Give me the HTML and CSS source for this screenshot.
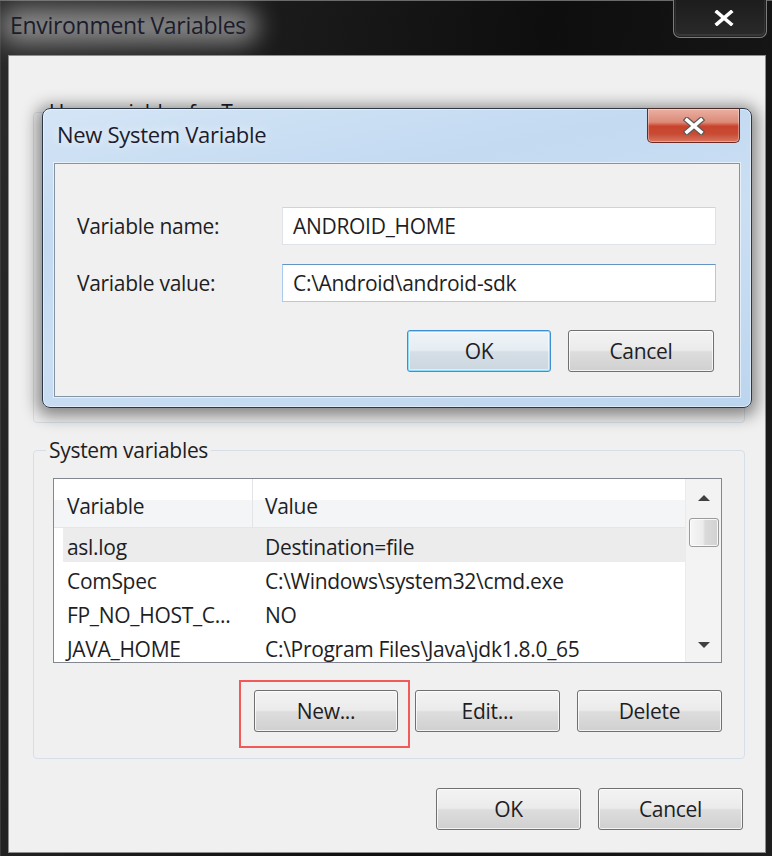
FILE: index.html
```html
<!DOCTYPE html>
<html>
<head>
<meta charset="utf-8">
<title>Environment Variables</title>
<link rel="stylesheet" href="styles.css">
</head>
<body>
<div class="window">
  <div class="titlebar">
    <span class="title">Environment Variables</span>
    <div class="close-outer">
      <svg width="20" height="16" viewBox="0 0 20 16"><path d="M3 2 L17 14 M17 2 L3 14" stroke="#ffffff" stroke-width="3.6" stroke-linecap="square" fill="none"/></svg>
    </div>
  </div>
  <div class="client">
    <fieldset class="group user-group"><legend>User variables for T</legend></fieldset>
    <fieldset class="group sys-group">
      <legend>System variables</legend>
      <div class="list">
        <div class="list-main">
          <div class="list-head"><div class="c1">Variable</div><div class="c2">Value</div></div>
          <div class="row sel"><div class="c1">asl.log</div><div class="c2">Destination=file</div></div>
          <div class="row"><div class="c1">ComSpec</div><div class="c2">C:\Windows\system32\cmd.exe</div></div>
          <div class="row"><div class="c1">FP_NO_HOST_C...</div><div class="c2">NO</div></div>
          <div class="row"><div class="c1">JAVA_HOME</div><div class="c2">C:\Program Files\Java\jdk1.8.0_65</div></div>
        </div>
        <div class="scrollbar">
          <div class="sb-btn"><span class="arrow-up"></span></div>
          <div class="thumb"></div>
          <div class="sb-track"></div>
          <div class="sb-btn sb-down"><span class="arrow-down"></span></div>
        </div>
      </div>
      <div class="btn-row">
        <button class="btn btn-new">New...</button>
        <button class="btn btn-w145">Edit...</button>
        <button class="btn btn-w145">Delete</button>
      </div>
    </fieldset>
    <div class="btn-row footer">
      <button class="btn btn-w145">OK</button>
      <button class="btn btn-w145">Cancel</button>
    </div>

    <div class="dialog">
      <div class="dialog-title">
        <span class="dialog-caption">New System Variable</span>
        <div class="close-red">
          <svg width="26" height="18" viewBox="0 0 26 18"><path d="M6 3 L20 15 M20 3 L6 15" stroke="#5a5a5a" stroke-width="6" stroke-linecap="square" fill="none"/><path d="M6 3 L20 15 M20 3 L6 15" stroke="#ffffff" stroke-width="3.6" stroke-linecap="square" fill="none"/></svg>
        </div>
      </div>
      <div class="dialog-body">
        <div class="form">
          <label class="lbl">Variable name:</label>
          <div class="input">ANDROID_HOME</div>
          <label class="lbl">Variable value:</label>
          <div class="input focused">C:\Android\android-sdk</div>
        </div>
        <div class="btn-row dlg-btns">
          <button class="btn btn-default">OK</button>
          <button class="btn btn-w146">Cancel</button>
        </div>
      </div>
    </div>
  </div>
</div>
</body>
</html>
```
FILE: styles.css
```css
* { box-sizing: border-box; }
html, body { margin: 0; padding: 0; }
body {
  width: 772px;
  height: 856px;
  overflow: hidden;
  background: #111;
  font-family: "Open Sans", "Noto Sans", sans-serif;
  font-size: 21px;
  letter-spacing: -0.3px;
  color: #1e1e24;
}

.window {
  height: 856px;
  display: flex;
  flex-direction: column;
  background: linear-gradient(100deg, #2a2a2a 0%, #1b1b1b 30%, #0e0e0e 60%, #151515 85%, #1e1e1e 100%);
  box-shadow: inset 0 1px 0 #6a6a6a, inset 1px 0 0 #3a3a3a;
}

.titlebar {
  height: 55px;
  flex: none;
  display: flex;
  justify-content: space-between;
  align-items: flex-start;
  position: relative;
  z-index: 0;
}
.title {
  position: relative;
  margin: 11px 0 0 10px;
  font-size: 23px;
  line-height: 28px;
  color: #1c1c2c;
}
.title::before {
  content: "";
  position: absolute;
  left: -10px;
  right: -12px;
  top: -2px;
  bottom: -4px;
  background: rgba(175, 175, 175, 0.75);
  filter: blur(12px);
  border-radius: 30px;
  z-index: -1;
}
.close-outer {
  width: 94px;
  height: 39px;
  margin: -1px 5px 0 0;
  border: 1px solid #7c7c7c;
  border-top: none;
  border-radius: 0 0 7px 7px;
  box-shadow: inset 0 0 0 1px #222, inset 0 -1px 0 2px rgba(255,255,255,0.07);
  background: linear-gradient(#1c1c1c, #2a2a2a);
  display: flex;
  align-items: center;
  justify-content: center;
  padding-left: 8px;
}

.client {
  flex: 1;
  margin: 0 6px 3px 8px;
  border: 1px solid #8e8e8e;
  background: #f0f0f0;
  position: relative;
  display: flex;
  flex-direction: column;
}

.group {
  border: 1px solid #d6dfe7;
  border-radius: 4px;
  margin: 0 20px 0 24px;
  min-width: 0;
}
.group legend {
  font-size: 21px;
  line-height: 24px;
  padding: 0 3px;
  margin-left: -7px;
}
.user-group {
  margin-top: 44px;
  height: 323px;
  padding: 0 19px;
}
.sys-group {
  margin-top: 15px;
  padding: 16px 22px 26px 19px;
}

.list {
  height: 185px;
  border: 1px solid #828790;
  background: #fff;
  display: flex;
}
.list-main {
  flex: 1;
  overflow: hidden;
}
.list-head {
  height: 49px;
  display: flex;
  background: linear-gradient(#fff 0, #fff 44%, #f4f5f7 44%, #f4f5f7 100%);
  border-bottom: 1px solid #e4e6e9;
}
.list-head .c1 {
  width: 199px;
  padding: 15px 0 0 13px;
  border-right: 1px solid #e2e4e7;
  line-height: 24px;
}
.list-head .c2 {
  padding: 15px 0 0 12px;
  line-height: 24px;
}
.row {
  height: 34px;
  display: flex;
  align-items: center;
  padding-top: 4px;
  line-height: 24px;
  white-space: nowrap;
}
.row .c1 { width: 199px; padding-left: 13px; }
.row .c2 { padding-left: 12px; }
.row.sel {
  background: linear-gradient(to right, transparent 9px, #ececec 9px);
}

.scrollbar {
  width: 36px;
  flex: none;
  background: #f3f3f3;
  border-left: 1px solid #ebebeb;
  display: flex;
  flex-direction: column;
  align-items: center;
}
.sb-btn {
  height: 37px;
  width: 100%;
  display: flex;
  align-items: center;
  justify-content: center;
}
.sb-down { height: 35px; }
.arrow-up {
  width: 0; height: 0;
  border-left: 6px solid transparent;
  border-right: 6px solid transparent;
  border-bottom: 6px solid #404040;
}
.arrow-down {
  width: 0; height: 0;
  border-left: 6px solid transparent;
  border-right: 6px solid transparent;
  border-top: 6px solid #404040;
}
.thumb {
  width: 30px;
  height: 29px;
  margin-top: 2px;
  border: 1px solid #9b9b9b;
  border-radius: 3px;
  background: linear-gradient(to right, #f6f6f6 0%, #ececec 45%, #dadada 55%, #d2d2d2 100%);
  box-shadow: inset 0 0 0 1px rgba(255,255,255,0.8);
}
.sb-track { flex: 1; }

.btn-row {
  display: flex;
  justify-content: flex-end;
  gap: 17px;
}
.sys-group .btn-row { margin-top: 27px; }
.footer { margin: 29px 22px 0 0; }

.btn {
  height: 42px;
  width: 145px;
  border: 1px solid #707070;
  border-radius: 3px;
  background: linear-gradient(#f3f3f3 0%, #ebebeb 48%, #dddddd 52%, #d0d0d0 100%);
  box-shadow: inset 0 0 0 1px rgba(255,255,255,0.75);
  font: inherit;
  letter-spacing: inherit;
  color: #1e1e24;
  padding: 0;
}
.btn-new {
  width: 144px;
  position: relative;
}
.btn-new::after {
  content: "";
  position: absolute;
  left: -16px;
  right: -13px;
  top: -11px;
  bottom: -17px;
  border: 2px solid #f25a5a;
}
.btn-w145 { width: 145px; }
.btn-w146 { width: 146px; }
.btn-default {
  width: 144px;
  border-color: #3c8fd2;
  box-shadow: inset 0 0 0 1px #8fdcfb, inset 0 0 0 2px rgba(255,255,255,0.5);
  background: linear-gradient(#eef4f8 0%, #e6edf2 48%, #d6dfe6 52%, #cbd6df 100%);
}

.dialog {
  position: absolute;
  left: 33px;
  top: 52px;
  width: 710px;
  height: 300px;
  border: 1px solid #2c3845;
  border-radius: 8px;
  background: linear-gradient(168deg, #d4e5f6 0%, #c3daf1 30%, #cbdff3 55%, #bcd5ee 100%);
  box-shadow: inset 0 0 0 1px rgba(255,255,255,0.45), 0 3px 16px 5px rgba(0,0,0,0.45);
  padding: 0 11px 10px 11px;
  display: flex;
  flex-direction: column;
}
.dialog-title {
  height: 54px;
  flex: none;
  display: flex;
  justify-content: space-between;
  align-items: flex-start;
}
.dialog-caption {
  margin: 11px 0 0 3px;
  font-size: 22px;
  line-height: 28px;
  color: #1c1c2c;
  text-shadow: 0 0 8px rgba(255,255,255,0.9);
}
.close-red {
  width: 93px;
  height: 35px;
  margin-top: -1px;
  border: 1px solid #6e2a22;
  border-top-color: #4a2a26;
  border-radius: 0 0 5px 5px;
  background: linear-gradient(#eab0a3 0%, #dc8a78 40%, #c9432d 52%, #c84a33 75%, #d87761 100%);
  box-shadow: inset 0 0 0 1px rgba(255,255,255,0.35);
  display: flex;
  align-items: center;
  justify-content: center;
}
.dialog-body {
  flex: 1;
  border: 1px solid #8494a4;
  background: #f0f0f0;
  padding: 43px 23px 0 22px;
  box-shadow: 0 0 0 1px rgba(255,255,255,0.55);
}
.form {
  display: grid;
  grid-template-columns: 205px 1fr;
  row-gap: 19px;
  align-items: center;
}
.lbl { line-height: 24px; }
.input {
  height: 38px;
  background: #fff;
  border: 1px solid #dfe3e8;
  border-top-color: #cfd4da;
  padding-left: 10px;
  display: flex;
  align-items: center;
  white-space: nowrap;
}
.input.focused {
  border-color: #a9cbee;
  border-top-color: #6594c4;
}
.dlg-btns {
  margin: 28px 2px 0 0;
}
```
